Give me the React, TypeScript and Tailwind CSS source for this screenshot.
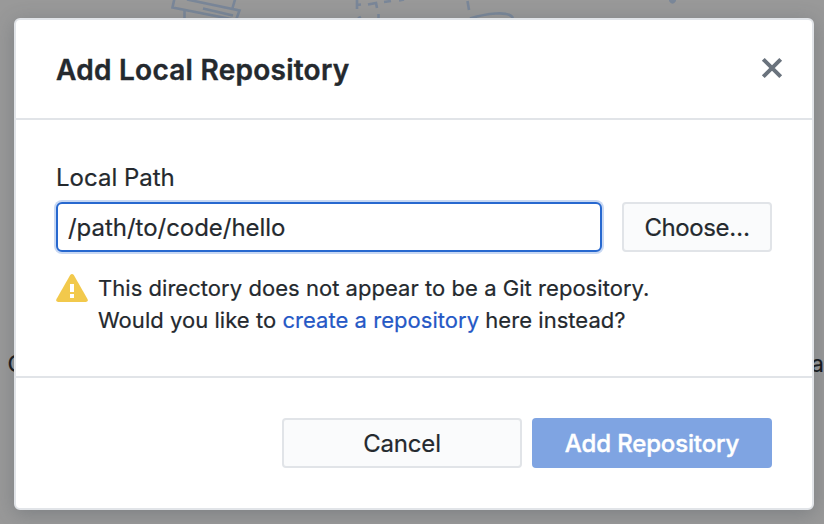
import React from 'react';

function Backdrop() {
  return (
    <div className="absolute inset-0 overflow-hidden bg-[#999999]">
      <svg className="absolute left-0 top-0" width="824" height="30" viewBox="0 0 824 30" fill="none" stroke="#7a8799" strokeWidth="2.6">
        <path d="M175 -4L172.5 7.5L236 20L239.500 10.500L187 -.5M232.500 8L235.500 -2M184.500 11V20M203 8.500L233 15.500" />
        <path d="M357 0V9M357 5L361 4.500M368 4.500L376 3L377 8M384 2L391 1M399 .5L404 -.5M378.500 14V20M358 18.500L361 17M467.500 1L469 10M470 18.500C485 14 509 10 513 18" />
        <path d="M669 -2V1Q672.500 6.500 676 1V-2Z" fill="#7a8799" stroke="none" />
      </svg>
      <span className="absolute left-[7.5px] top-[350px] text-[23px] leading-7 text-[#16181b]">C</span>
      <span className="absolute left-[811px] top-[350px] text-[23px] leading-7 text-[#16181b]">a</span>
    </div>
  );
}

export default function App() {
  return (
    <main className="relative flex h-[524px] w-[824px] items-start overflow-hidden pl-[14px] pt-[18px] font-['Inter','Liberation_Sans',sans-serif] text-[#24292e] [-webkit-text-stroke:0.2px]">
      <Backdrop />
      <section role="dialog" className="relative flex h-[492px] w-[800px] flex-col rounded-[6px] border-2 border-[#e1e4e8] bg-white shadow-[0_4px_20px_rgba(60,70,80,0.3)]">
        <header className="flex h-[100px] shrink-0 items-center justify-between border-b-2 border-[#e1e4e8] pl-10 pr-[29px]">
          <h1 className="whitespace-nowrap pt-[2px] text-[28px] font-semibold leading-8 tracking-[0.26px] [-webkit-text-stroke:0.4px]"><span>Add Local Repository</span></h1>
          <button aria-label="Close" className="pb-[2px] text-[#6a737d]">
            <svg width="22" height="22" viewBox="0 0 22 22" fill="none" stroke="currentColor" strokeWidth="4"><path d="M2.300 2.300L19.700 19.700M19.700 2.300L2.300 19.700" /></svg>
          </button>
        </header>
        <div className="flex h-[258px] shrink-0 flex-col border-b-2 border-[#e1e4e8] px-10 pt-[42px]">
          <label htmlFor="path" className="h-10 whitespace-nowrap text-[24px] leading-8"><span>Local Path</span></label>
          <div className="flex gap-5">
            <input id="path" defaultValue="/path/to/code/hello" className="h-[50px] w-[546px] rounded-[6px] border-2 border-[#2768cf] bg-white px-[10px] text-[24px] tracking-[-0.03px] shadow-[0_0_0_2px_#c8d8f3] outline-none" />
            <button className="h-[50px] w-[150px] rounded-[4px] border-2 border-[#e1e4e8] bg-[#fafbfc] pt-[2px] text-[24px] tracking-[-0.4px]"><span>Choose…</span></button>
          </div>
          <div className="mt-5 flex">
            <svg className="mt-[2px] shrink-0" width="32" height="28" viewBox="0 0 32 28">
              <path d="M14.2 1.1Q16 -1 17.8 1.1L31.6 25.2Q32.3 28 29.7 28H2.3Q-.3 28 .4 25.2Z" fill="#f2c94c" />
              <path d="M14 10h4v8h-4zM14 20h4v4h-4z" fill="#fff" />
            </svg>
            <p className="ml-[10px] whitespace-nowrap text-[22px] leading-8 tracking-[0.04px]">
              <span>This directory does not appear to be a Git repository.</span><br />
              <span>Would you like to <a className="text-[#2558c5] [-webkit-text-stroke-color:#2558c5]">create a repository</a> here instead?</span>
            </p>
          </div>
        </div>
        <footer className="flex justify-end gap-[10px] px-10 pt-10">
          <button className="h-[50px] w-[240px] rounded-[4px] border-2 border-[#e1e4e8] bg-[#fafbfc] pt-[2px] text-[24px] tracking-[-0.2px]"><span>Cancel</span></button>
          <button className="h-[50px] w-[240px] rounded-[4px] bg-[#7fa4e2] pt-[2px] text-[24px] font-medium tracking-[-0.15px] text-white [-webkit-text-stroke:0.4px_white]"><span>Add Repository</span></button>
        </footer>
      </section>
    </main>
  );
}
